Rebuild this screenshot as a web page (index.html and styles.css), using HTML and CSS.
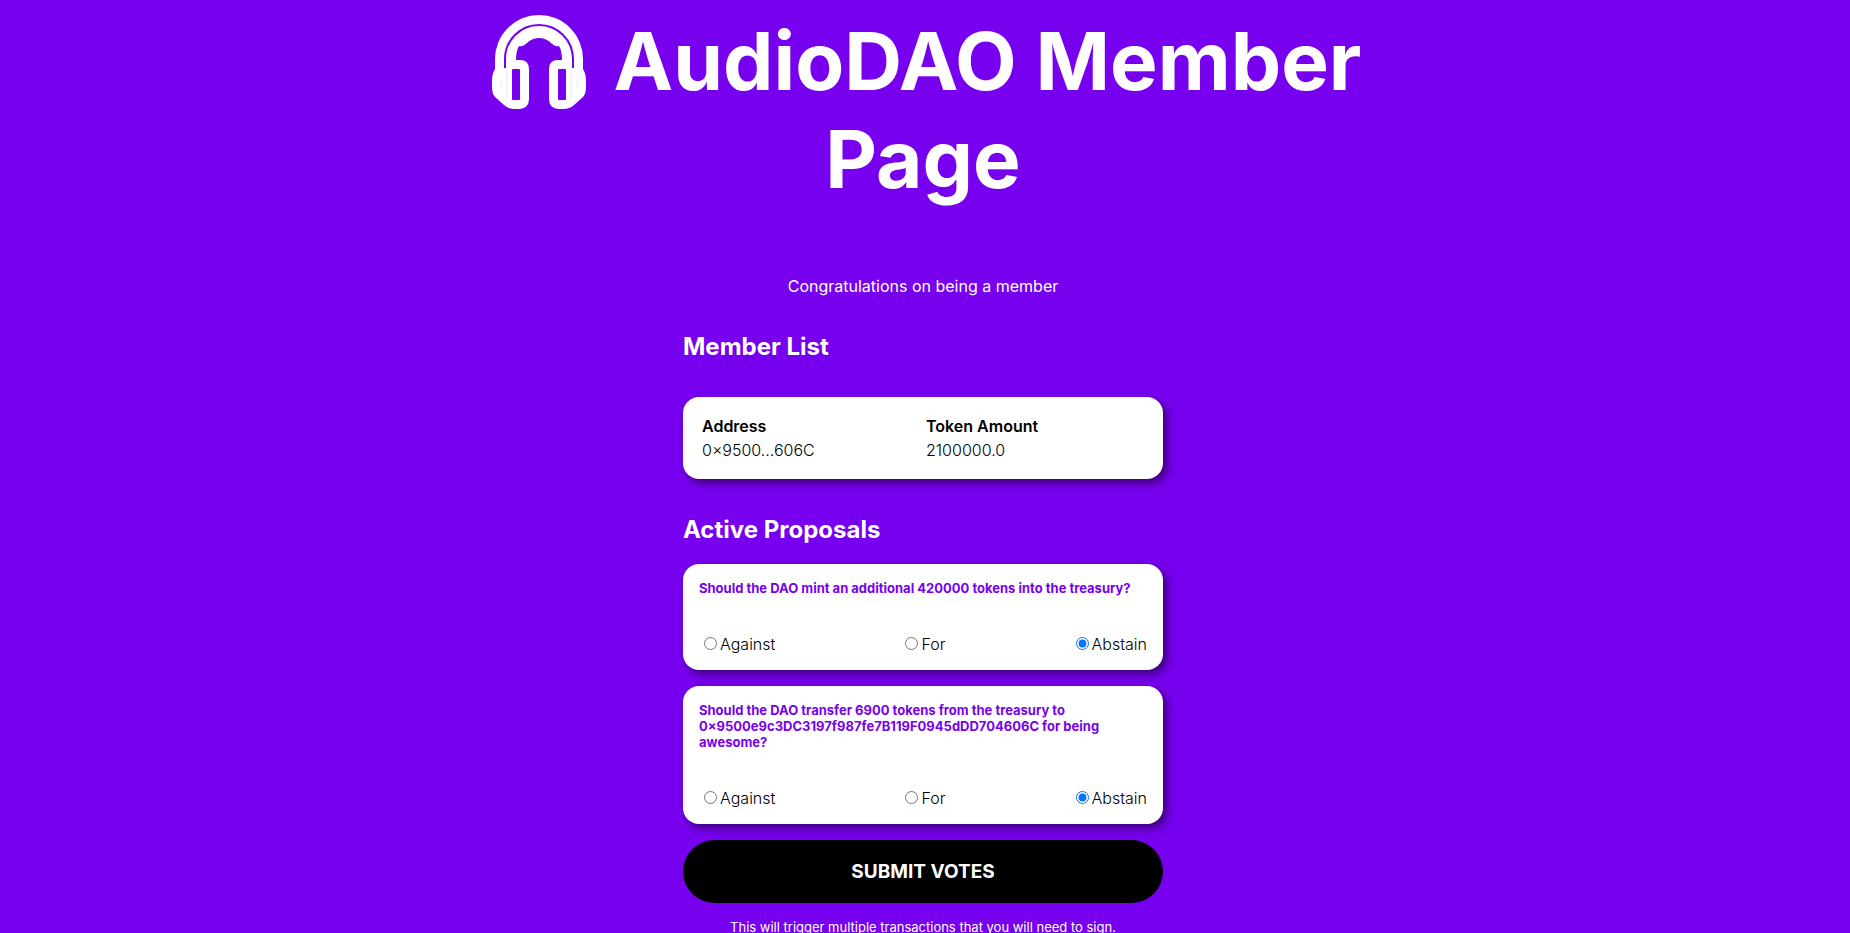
FILE: index.html
```html
<!DOCTYPE html>
<html lang="en">
<head>
<meta charset="utf-8">
<title>AudioDAO</title>
<link rel="stylesheet" href="styles.css">
</head>
<body>
<main class="member-page">
  <h1 class="title"><svg class="logo" viewBox="0 0 96 96" aria-hidden="true"><path fill="#fff" d="M4 55V45a44 44 0 0 1 88 0v10q3 5 3 12v5q0 8-3 11L83 91q-4 4-11 4h-5q-9-1-9-10V55q0-9 9-9h4C71 40 70 35 68 32C65 33 62 31 59 28Q54 24 48 24T37 28C34 31 31 33 28 32C26 35 25 40 25 46h4q9 0 9 9v30q0 9-9 10h-5q-7 0-11-4L4 83q-3-3-3-11v-5q0-7 3-12z"/><path fill="none" stroke="#7700ee" stroke-width="2" d="M14 54V45a34 34 0 0 1 68 0v9"/><path fill="none" stroke="#efe4fd" d="M10 65v8M16 58v26M80 58v26M86 65v8"/><rect x="21" y="55" width="8" height="31" rx="1" fill="#7700ee"/><rect x="67" y="55" width="8" height="31" rx="1" fill="#7700ee"/></svg> AudioDAO Member Page</h1>
  <p class="intro">Congratulations on being a member</p>
  <div class="content">
    <section>
      <h2>Member List</h2>
      <table class="card members">
        <thead><tr><th>Address</th><th>Token Amount</th></tr></thead>
        <tbody><tr><td>0×9500...606C</td><td>2100000.0</td></tr></tbody>
      </table>
    </section>
    <section>
      <h2>Active Proposals</h2>
      <form class="proposals">
        <div class="card">
          <h5>Should the DAO mint an additional 420000 tokens into the treasury?</h5>
          <div class="votes">
            <div><input type="radio" id="a0" name="p0"><label for="a0">Against</label></div>
            <div><input type="radio" id="a1" name="p0"><label for="a1">For</label></div>
            <div><input type="radio" id="a2" name="p0" checked><label for="a2">Abstain</label></div>
          </div>
        </div>
        <div class="card">
          <h5>Should the DAO transfer 6900 tokens from the treasury to 0×9500e9c3DC3197f987fe7B119F0945dDD704606C for being awesome?</h5>
          <div class="votes">
            <div><input type="radio" id="b0" name="p1"><label for="b0">Against</label></div>
            <div><input type="radio" id="b1" name="p1"><label for="b1">For</label></div>
            <div><input type="radio" id="b2" name="p1" checked><label for="b2">Abstain</label></div>
          </div>
        </div>
        <button class="submit" type="submit">SUBMIT VOTES</button>
        <small class="note">This will trigger multiple transactions that you will need to sign.</small>
      </form>
    </section>
  </div>
</main>
</body>
</html>
```
FILE: styles.css
```css
* { box-sizing: border-box; }
html { background: #7700ee; }
body { margin: 0; height: 100vh; overflow: hidden; color: #fff; font: 16px/24px Inter, sans-serif; }
.member-page { display: flex; flex-direction: column; align-items: center; padding-right: 4px; text-align: center; }
.title { margin: 12px 0 66px; max-width: 960px; font-size: 80px; line-height: 98px; font-weight: 700; }
.logo { width: 96px; height: 96px; margin: 0 8px 0 6px; vertical-align: bottom; }
.intro { margin: 0 0 34px; }
.content { width: 480px; max-width: 100%; text-align: left; }
h2 { margin: 0 0 20px; font-size: 24px; line-height: 29px; font-weight: 700; }
.card { width: 100%; padding: 16px 16px 14px; border-radius: 16px; background: #fff; color: #000; box-shadow: 4px 4px 8px rgba(0, 0, 0, 0.5); }
.members { table-layout: fixed; border-spacing: 0; margin: 36px 0; padding: 17px 16px; font-weight: 300; }
.members th, .members td { padding: 0 3px; text-align: left; }
.members th { font-weight: 600; }
.proposals { display: flex; flex-direction: column; gap: 16px; }
h5 { margin: 0 0 36px; color: #7700ee; font-size: 13px; line-height: 16px; font-weight: 700; }
.votes { display: flex; justify-content: space-between; font-weight: 300; }
.votes input { margin: 3px 3px 0 5px; }
.submit { height: 63px; border: 0; border-radius: 32px; background: #000; color: #fff; font: 700 19px Inter, sans-serif; }
.note { font-size: 13px; line-height: 16px; text-align: center; }
```
